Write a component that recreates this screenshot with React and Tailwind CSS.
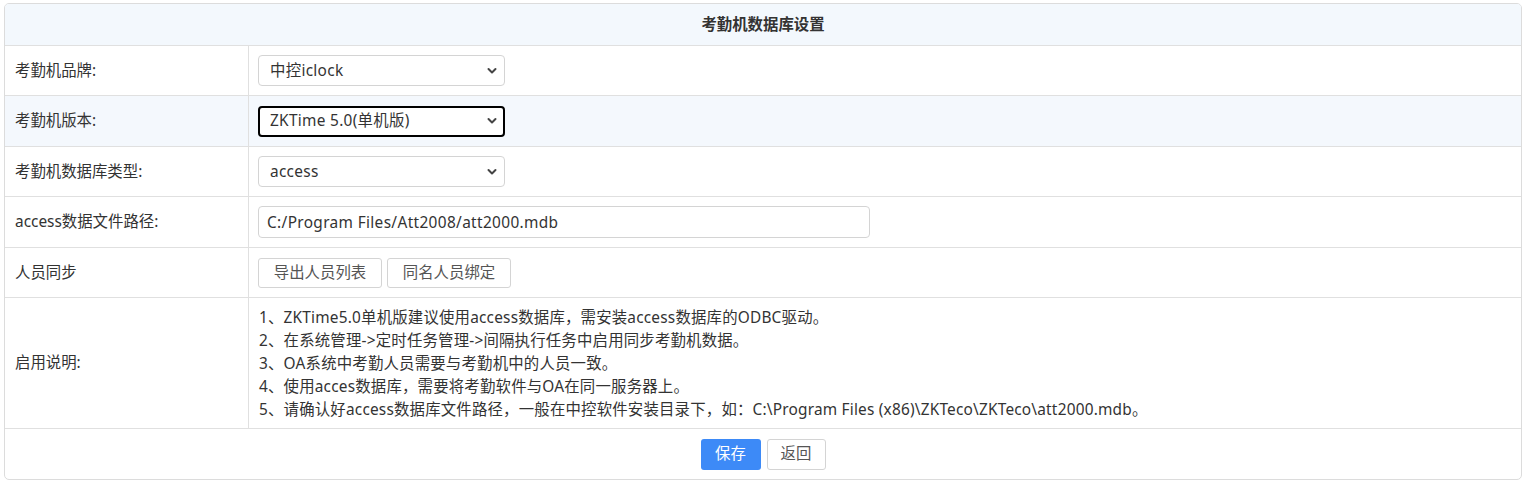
import React from "react";

const font = { fontFamily: '"Noto Sans", "Noto Sans CJK SC", sans-serif' };

function Chevron() {
  return (
    <svg
      className="pointer-events-none absolute right-[8px] top-1/2 -translate-y-1/2"
      width="10"
      height="7"
      viewBox="0 0 10 7"
    >
      <path d="M1.5 1.5 L5 5 L8.5 1.5" fill="none" stroke="#444" strokeWidth="2" strokeLinecap="round" strokeLinejoin="round" />
    </svg>
  );
}

function Select({ value, focused }) {
  return (
    <div className="relative w-[247px] h-[31px]">
      <select
        defaultValue={value}
        className={
          "appearance-none w-full h-full rounded-[4px] bg-white pr-[24px] text-[15.4px] tracking-[0.3px] text-[#333] outline-none " +
          (focused ? "border-2 border-black pl-[10px]" : "border border-[#d4d4d4] pl-[11px]")
        }
        style={font}
      >
        <option>{value}</option>
      </select>
      <Chevron />
    </div>
  );
}

function Row({ label, h, bg, children }) {
  return (
    <div className={"flex border-b border-[#e0e0e0] " + h + " " + (bg || "")}>
      <div className="w-[244px] shrink-0 border-r border-[#e0e0e0] flex items-center pl-[10px]">
        {label}
      </div>
      <div className="flex-1 flex items-center pl-[9px]">{children}</div>
    </div>
  );
}

export default function App() {
  const notes = [
    "1、ZKTime5.0单机版建议使用access数据库，需安装access数据库的ODBC驱动。",
    "2、在系统管理->定时任务管理->间隔执行任务中启用同步考勤机数据。",
    "3、OA系统中考勤人员需要与考勤机中的人员一致。",
    "4、使用acces数据库，需要将考勤软件与OA在同一服务器上。",
    "5、请确认好access数据库文件路径，一般在中控软件安装目录下，如：C:\\Program Files (x86)\\ZKTeco\\ZKTeco\\att2000.mdb。",
  ];
  return (
    <div className="bg-white w-[1530px] h-[496px] pt-[3px] pl-[4px] text-[15.4px] text-[#333]" style={font}>
      <div className="w-[1518px] border border-[#dcdcdc] rounded-[5px] overflow-hidden">
        <div className="h-[42px] border-b border-[#e0e0e0] bg-[#f3f8fd] flex items-center justify-center font-bold">
          考勤机数据库设置
        </div>
        <Row label="考勤机品牌:" h="h-[50px]">
          <Select value="中控iclock" />
        </Row>
        <Row label="考勤机版本:" h="h-[51px]" bg="bg-[#f4f8fd]">
          <Select value="ZKTime 5.0(单机版)" focused />
        </Row>
        <Row label="考勤机数据库类型:" h="h-[50px]">
          <Select value="access" />
        </Row>
        <Row label="access数据文件路径:" h="h-[51px]">
          <input
            defaultValue="C:/Program Files/Att2008/att2000.mdb"
            className="w-[612px] h-[32px] border border-[#d4d4d4] rounded-[4px] pl-[8px] text-[15.4px] tracking-[0.35px] text-[#333] outline-none"
            style={font}
          />
        </Row>
        <Row label="人员同步" h="h-[50px]">
          <div className="flex gap-[5px]">
            <button className="h-[30px] w-[124px] border border-[#d4d4d4] rounded-[3px] bg-white text-[#555] text-[15.4px]" style={font}>
              导出人员列表
            </button>
            <button className="h-[30px] w-[124px] border border-[#d4d4d4] rounded-[3px] bg-white text-[#555] text-[15.4px]" style={font}>
              同名人员绑定
            </button>
          </div>
        </Row>
        <Row label="启用说明:" h="h-[131px]">
          <div className="flex flex-col leading-[23px] pl-[1px] tracking-[0.2px]">
            {notes.map((n) => (
              <div key={n}>{n}</div>
            ))}
          </div>
        </Row>
        <div className="h-[50px] flex items-center justify-center gap-[6px]">
          <button className="h-[31px] w-[60px] rounded-[3px] bg-[#3d8af7] text-white text-[15.4px]" style={font}>
            保存
          </button>
          <button className="h-[31px] w-[59px] rounded-[3px] border border-[#d4d4d4] bg-white text-[#555] text-[15.4px]" style={font}>
            返回
          </button>
        </div>
      </div>
    </div>
  );
}
